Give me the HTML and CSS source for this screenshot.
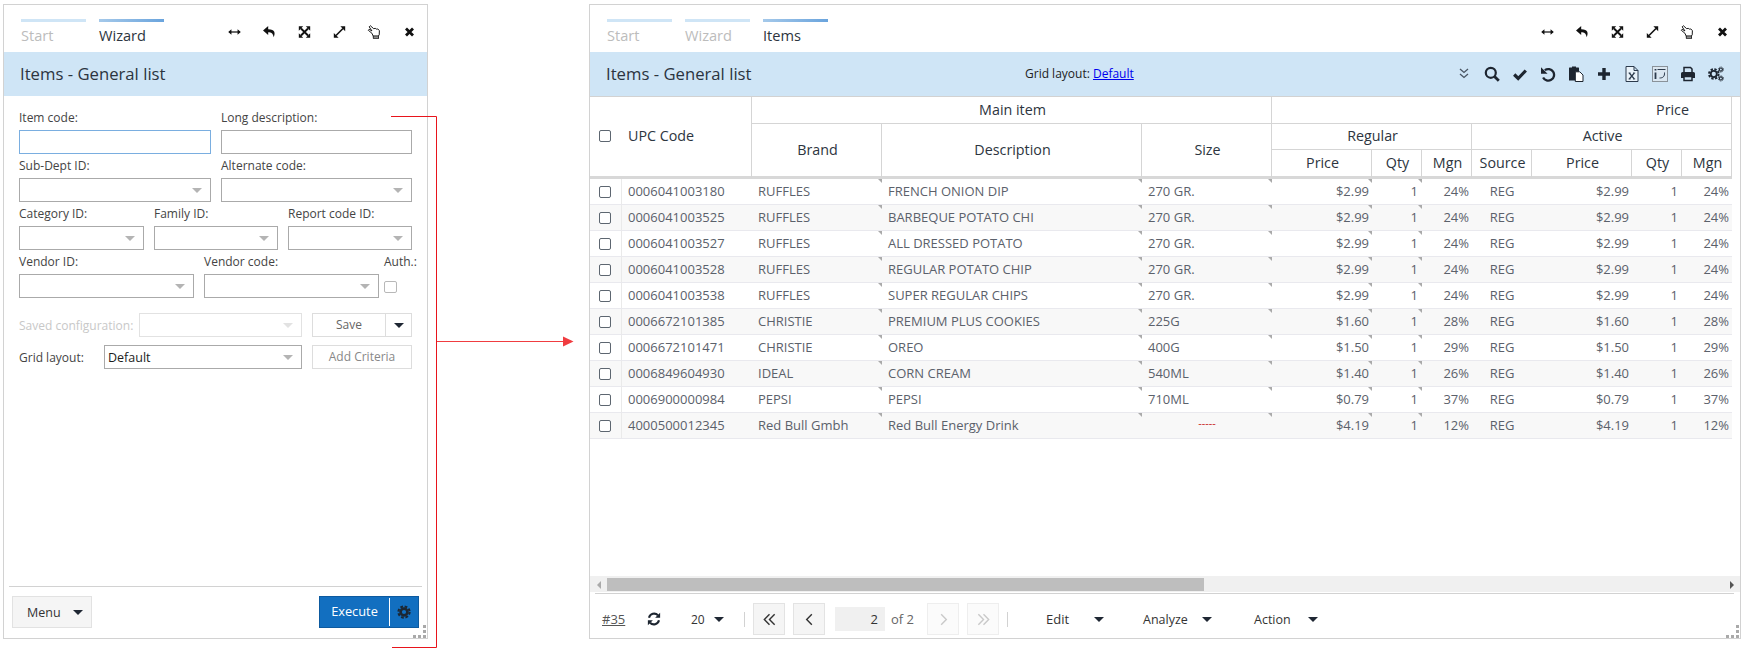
FILE: index.html
```html
<!DOCTYPE html>
<html lang="en">
<head>
<meta charset="utf-8">
<title>Items - General list</title>
<link rel="stylesheet" href="styles.css">
</head>
<body>
<svg class="sprite" xmlns="http://www.w3.org/2000/svg">
  <symbol id="i-width" viewBox="0 0 16 16"><path d="M2 8h12" stroke="currentColor" stroke-width="1.4"/><path d="M0.800 8L4.500 4.800v6.400zM15.200 8l-3.700-3.200v6.400z" fill="currentColor"/></symbol>
  <symbol id="i-reply" viewBox="0 0 16 16"><path d="M6.500 1.200L.6 6.300l5.900 5V8.300c3.600 0 5.300 1 6.300 5.700 1.900-4.500 1.900-8.800-6.300-9.100z" fill="currentColor"/></symbol>
  <symbol id="i-move" viewBox="0 0 16 16"><path d="M4 4l8 8M12 4l-8 8" stroke="currentColor" stroke-width="2.200"/><path d="M1.500 1.500h5l-5 5zM14.500 1.500v5l-5-5zM1.500 14.500v-5l5 5zM14.500 14.500h-5l5-5z" fill="currentColor"/></symbol>
  <symbol id="i-diag" viewBox="0 0 16 16"><path d="M4 12l8-8" stroke="currentColor" stroke-width="1.800"/><path d="M9 1.500h5.500V7zM1.500 9v5.500H7z" fill="currentColor"/></symbol>
  <symbol id="i-hand" viewBox="0 0 16 16"><path d="M3.200 .8l3.900 3.400 1.700-.4 1.400.9 1.600-.1 1.800 1.700-.2 4.900-1.100 1.500H6.600L5 9.400 .9 6l1-1.100 3.200 1.900-3.200-4.700z" fill="#fff" stroke="currentColor" stroke-width="1.100"/><path d="M6 12.200h7l.2 3.400H6.200z" fill="currentColor"/><path d="M7 13.300h5.200v1H7z" fill="#fff"/></symbol>
  <symbol id="i-close" viewBox="0 0 16 16"><path d="M4 4l8 8M12 4l-8 8" stroke="currentColor" stroke-width="3.200"/></symbol>
  <symbol id="i-dbl" viewBox="0 0 16 16"><path d="M4 3l4 3.500L12 3M4 8l4 3.500L12 8" fill="none" stroke="currentColor" stroke-width="1.300"/></symbol>
  <symbol id="i-search" viewBox="0 0 16 16"><circle cx="6.800" cy="6.800" r="5" fill="none" stroke="currentColor" stroke-width="2.200"/><path d="M10.500 10.500l4.300 4.300" stroke="currentColor" stroke-width="2.800"/></symbol>
  <symbol id="i-check" viewBox="0 0 16 16"><path d="M2.200 8.500l4 4 7.600-8" fill="none" stroke="currentColor" stroke-width="3.200"/></symbol>
  <symbol id="i-undo" viewBox="0 0 16 16"><path d="M4.800 4.200A5.800 5.800 0 1 1 3.100 11.500" fill="none" stroke="currentColor" stroke-width="2.300"/><path d="M1 1.200v6.600h6.600z" fill="currentColor"/></symbol>
  <symbol id="i-paste" viewBox="0 0 16 16"><path d="M1.500 1.500h2.500V.5h4v1h2.500a.5.500 0 0 1 .5.500V14.500H1V2a.5.500 0 0 1 .5-.500z" fill="currentColor"/><path d="M7.300 5.800h4.500l3.200 3.200v6.500H7.300z" fill="#fff" stroke="currentColor"/></symbol>
  <symbol id="i-plus" viewBox="0 0 16 16"><path d="M8 2v12M2 8h12" stroke="currentColor" stroke-width="3.400"/></symbol>
  <symbol id="i-xls" viewBox="0 0 16 16"><path d="M2 .5h8l4 4v11H2z M10 .5v4h4" fill="#eaf3fa" stroke="currentColor"/><path d="M5.300 7l5 6M10.300 7l-5 6" stroke="currentColor" stroke-width="1.200"/><path d="M4.500 7h2.200M9 7h2.200M4.500 13h2.200M9 13h2.200" stroke="currentColor" stroke-width=".8"/></symbol>
  <symbol id="i-layout" viewBox="0 0 16 16"><rect x=".5" y=".5" width="15" height="15" fill="#dbe7f1" stroke="#8a929a"/><path d="M5.500 3.500h8" stroke="currentColor"/><path d="M3.500 3v1.500M3.500 6.500V13" stroke="currentColor" stroke-width="1.800"/><path d="M12.500 6.500c.3 4-1.500 5.500-5 5.500" fill="none" stroke="currentColor"/></symbol>
  <symbol id="i-print" viewBox="0 0 16 16"><path d="M4 6V1.500h6.500L12 3v3" fill="none" stroke="currentColor" stroke-width="1.500"/><path d="M2.500 6h11A1.500 1.500 0 0 1 15 7.500V12h-3v-2H4v2H1V7.500A1.500 1.500 0 0 1 2.500 6z" fill="currentColor"/><path d="M4 10.500h8v4H4z" fill="none" stroke="currentColor" stroke-width="1.500"/></symbol>
  <symbol id="i-gear" viewBox="0 0 16 16"><circle cx="8" cy="8" r="3.900" fill="none" stroke="currentColor" stroke-width="3"/><circle cx="8" cy="8" r="6.400" fill="none" stroke="currentColor" stroke-width="2.400" stroke-dasharray="3.100 1.925"/></symbol>
  <symbol id="i-gears" viewBox="0 0 18 18"><circle cx="6.500" cy="9" r="3.400" fill="none" stroke="currentColor" stroke-width="2"/><circle cx="6.500" cy="9" r="5.400" fill="none" stroke="currentColor" stroke-width="2.200" stroke-dasharray="2.600 1.640"/><circle cx="14.500" cy="4" r="1.700" fill="none" stroke="currentColor" stroke-width="1.300"/><circle cx="14.500" cy="14" r="1.700" fill="none" stroke="currentColor" stroke-width="1.300"/><circle cx="14.500" cy="4" r="2.900" fill="none" stroke="currentColor" stroke-width=".9" stroke-dasharray="1.300 1.000"/><circle cx="14.500" cy="14" r="2.900" fill="none" stroke="currentColor" stroke-width=".9" stroke-dasharray="1.300 1.000"/></symbol>
  <symbol id="i-refresh" viewBox="0 0 16 16"><path d="M2.300 6.500A6 6 0 0 1 12.500 3.800M13.700 9.500A6 6 0 0 1 3.500 12.200" fill="none" stroke="currentColor" stroke-width="2.400"/><path d="M15 .8v5.700H9.300zM1 15.200V9.500h5.700z" fill="currentColor"/></symbol>
  <symbol id="i-first" viewBox="0 0 16 16"><path d="M8 2.500L2.500 8 8 13.500M13.500 2.500L8 8l5.500 5.500" fill="none" stroke="currentColor" stroke-width="1.500"/></symbol>
  <symbol id="i-prev" viewBox="0 0 16 16"><path d="M10.500 2.500L5 8l5.500 5.500" fill="none" stroke="currentColor" stroke-width="1.500"/></symbol>
  <symbol id="i-next" viewBox="0 0 16 16"><path d="M5.500 2.500L11 8l-5.500 5.500" fill="none" stroke="currentColor" stroke-width="1.500"/></symbol>
  <symbol id="i-last" viewBox="0 0 16 16"><path d="M2.500 2.500L8 8l-5.500 5.500M8 2.500L13.500 8 8 13.500" fill="none" stroke="currentColor" stroke-width="1.500"/></symbol>
  <symbol id="i-grip" viewBox="0 0 13 13"><path d="M10 0h3v3h-3zM10 5h3v3h-3zM10 10h3v3h-3zM5 10h3v3H5zM0 10h3v3H0z" fill="#a9a9a9"/></symbol>
</svg>

<section class="panel panel-wizard">
  <header class="tabs">
    <div class="tab"><span class="tab-bar"></span><span class="tab-label">Start</span></div>
    <div class="tab tab-active"><span class="tab-bar"></span><span class="tab-label">Wizard</span></div>
    <div class="win-icons">
      <svg class="win-icon"><use href="#i-width"/></svg>
      <svg class="win-icon"><use href="#i-reply"/></svg>
      <svg class="win-icon"><use href="#i-move"/></svg>
      <svg class="win-icon"><use href="#i-diag"/></svg>
      <svg class="win-icon"><use href="#i-hand"/></svg>
      <svg class="win-icon"><use href="#i-close"/></svg>
    </div>
  </header>
  <div class="band"><h1 class="title">Items - General list</h1></div>

  <form class="form">
    <div class="row row-2">
      <label class="field"><span class="lbl">Item code:</span><input class="ctl ctl-focus" type="text"></label>
      <label class="field"><span class="lbl">Long description:</span><input class="ctl" type="text"></label>
    </div>
    <div class="row row-2">
      <div class="field"><span class="lbl">Sub-Dept ID:</span><div class="ctl sel"></div></div>
      <div class="field"><span class="lbl">Alternate code:</span><div class="ctl sel"></div></div>
    </div>
    <div class="row row-3">
      <div class="field"><span class="lbl">Category ID:</span><div class="ctl sel"></div></div>
      <div class="field"><span class="lbl">Family ID:</span><div class="ctl sel"></div></div>
      <div class="field"><span class="lbl">Report code ID:</span><div class="ctl sel"></div></div>
    </div>
    <div class="row row-v">
      <div class="field"><span class="lbl">Vendor ID:</span><div class="ctl sel"></div></div>
      <div class="field"><span class="lbl">Vendor code:</span><div class="ctl sel"></div></div>
      <div class="field field-auth"><span class="lbl">Auth.:</span><span class="cb cb-light"></span></div>
    </div>
    <div class="cfg cfg-first">
      <div class="cfg-main">
        <span class="cfg-lbl cfg-lbl-off">Saved configuration:</span>
        <div class="ctl sel sel-off cfg-sel"></div>
      </div>
      <div class="split">
        <span class="split-main">Save</span>
        <span class="split-drop"><span class="caret"></span></span>
      </div>
    </div>
    <div class="cfg">
      <div class="cfg-main">
        <span class="cfg-lbl cfg-lbl-grid">Grid layout:</span>
        <div class="ctl sel sel-val cfg-sel"><span>Default</span></div>
      </div>
      <div class="btn-plain">Add Criteria</div>
    </div>
  </form>

  <footer class="wiz-foot">
    <div class="menu-btn">Menu<span class="caret"></span></div>
    <div class="exec">
      <span class="exec-main">Execute</span>
      <span class="exec-gear"><svg class="gear"><use href="#i-gear"/></svg></span>
    </div>
  </footer>
  <svg class="grip"><use href="#i-grip"/></svg>
</section>

<section class="panel panel-items">
  <header class="tabs">
    <div class="tab"><span class="tab-bar"></span><span class="tab-label">Start</span></div>
    <div class="tab"><span class="tab-bar"></span><span class="tab-label">Wizard</span></div>
    <div class="tab tab-active"><span class="tab-bar"></span><span class="tab-label">Items</span></div>
    <div class="win-icons">
      <svg class="win-icon"><use href="#i-width"/></svg>
      <svg class="win-icon"><use href="#i-reply"/></svg>
      <svg class="win-icon"><use href="#i-move"/></svg>
      <svg class="win-icon"><use href="#i-diag"/></svg>
      <svg class="win-icon"><use href="#i-hand"/></svg>
      <svg class="win-icon"><use href="#i-close"/></svg>
    </div>
  </header>
  <div class="band">
    <h1 class="title title-fixed">Items - General list</h1>
    <span class="layout-note">Grid layout: <a class="layout-link" href="#">Default</a></span>
    <div class="tools">
      <svg class="tool tool-dbl"><use href="#i-dbl"/></svg>
      <svg class="tool"><use href="#i-search"/></svg>
      <svg class="tool"><use href="#i-check"/></svg>
      <svg class="tool"><use href="#i-undo"/></svg>
      <svg class="tool"><use href="#i-paste"/></svg>
      <svg class="tool"><use href="#i-plus"/></svg>
      <svg class="tool tool-thin"><use href="#i-xls"/></svg>
      <svg class="tool tool-thin"><use href="#i-layout"/></svg>
      <svg class="tool"><use href="#i-print"/></svg>
      <svg class="tool"><use href="#i-gears"/></svg>
    </div>
  </div>

  <div class="grid-wrap">
    <table class="grid">
      <colgroup>
        <col class="w32"><col class="w130"><col class="w130"><col class="w260"><col class="w130">
        <col class="w100"><col class="w50"><col class="w50"><col class="w60"><col class="w100"><col class="w50"><col class="w50">
      </colgroup>
      <thead>
        <tr class="h1">
          <th rowspan="3" class="th-chk"><span class="cb"></span></th>
          <th rowspan="3" class="th-upc">UPC Code</th>
          <th colspan="3">Main item</th>
          <th colspan="7" class="th-price-group">Price</th>
        </tr>
        <tr class="h2">
          <th rowspan="2" class="th-last">Brand</th>
          <th rowspan="2" class="th-last">Description</th>
          <th rowspan="2" class="th-last">Size</th>
          <th colspan="3">Regular</th>
          <th colspan="4">Active</th>
        </tr>
        <tr class="h3">
          <th class="th-last">Price</th><th class="th-last">Qty</th><th class="th-last">Mgn</th>
          <th class="th-last">Source</th><th class="th-last">Price</th><th class="th-last">Qty</th><th class="th-last">Mgn</th>
        </tr>
      </thead>
      <tbody>
        <tr><td class="c-chk"><span class="cb"></span></td><td>0006041003180</td><td class="mk">RUFFLES</td><td class="mk">FRENCH ONION DIP</td><td class="mk">270 GR.</td><td class="num mk">$2.99</td><td class="num qty mk">1</td><td class="num">24%</td><td class="c-src">REG</td><td class="num">$2.99</td><td class="num qty">1</td><td class="num">24%</td></tr>
        <tr><td class="c-chk"><span class="cb"></span></td><td>0006041003525</td><td class="mk">RUFFLES</td><td class="mk">BARBEQUE POTATO CHI</td><td class="mk">270 GR.</td><td class="num mk">$2.99</td><td class="num qty mk">1</td><td class="num">24%</td><td class="c-src">REG</td><td class="num">$2.99</td><td class="num qty">1</td><td class="num">24%</td></tr>
        <tr><td class="c-chk"><span class="cb"></span></td><td>0006041003527</td><td class="mk">RUFFLES</td><td class="mk">ALL DRESSED POTATO</td><td class="mk">270 GR.</td><td class="num mk">$2.99</td><td class="num qty mk">1</td><td class="num">24%</td><td class="c-src">REG</td><td class="num">$2.99</td><td class="num qty">1</td><td class="num">24%</td></tr>
        <tr><td class="c-chk"><span class="cb"></span></td><td>0006041003528</td><td class="mk">RUFFLES</td><td class="mk">REGULAR POTATO CHIP</td><td class="mk">270 GR.</td><td class="num mk">$2.99</td><td class="num qty mk">1</td><td class="num">24%</td><td class="c-src">REG</td><td class="num">$2.99</td><td class="num qty">1</td><td class="num">24%</td></tr>
        <tr><td class="c-chk"><span class="cb"></span></td><td>0006041003538</td><td class="mk">RUFFLES</td><td class="mk">SUPER REGULAR CHIPS</td><td class="mk">270 GR.</td><td class="num mk">$2.99</td><td class="num qty mk">1</td><td class="num">24%</td><td class="c-src">REG</td><td class="num">$2.99</td><td class="num qty">1</td><td class="num">24%</td></tr>
        <tr><td class="c-chk"><span class="cb"></span></td><td>0006672101385</td><td class="mk">CHRISTIE</td><td class="mk">PREMIUM PLUS COOKIES</td><td class="mk">225G</td><td class="num mk">$1.60</td><td class="num qty mk">1</td><td class="num">28%</td><td class="c-src">REG</td><td class="num">$1.60</td><td class="num qty">1</td><td class="num">28%</td></tr>
        <tr><td class="c-chk"><span class="cb"></span></td><td>0006672101471</td><td class="mk">CHRISTIE</td><td class="mk">OREO</td><td class="mk">400G</td><td class="num mk">$1.50</td><td class="num qty mk">1</td><td class="num">29%</td><td class="c-src">REG</td><td class="num">$1.50</td><td class="num qty">1</td><td class="num">29%</td></tr>
        <tr><td class="c-chk"><span class="cb"></span></td><td>0006849604930</td><td class="mk">IDEAL</td><td class="mk">CORN CREAM</td><td class="mk">540ML</td><td class="num mk">$1.40</td><td class="num qty mk">1</td><td class="num">26%</td><td class="c-src">REG</td><td class="num">$1.40</td><td class="num qty">1</td><td class="num">26%</td></tr>
        <tr><td class="c-chk"><span class="cb"></span></td><td>0006900000984</td><td class="mk">PEPSI</td><td class="mk">PEPSI</td><td class="mk">710ML</td><td class="num mk">$0.79</td><td class="num qty mk">1</td><td class="num">37%</td><td class="c-src">REG</td><td class="num">$0.79</td><td class="num qty">1</td><td class="num">37%</td></tr>
        <tr><td class="c-chk"><span class="cb"></span></td><td>4000500012345</td><td class="mk">Red Bull Gmbh</td><td class="mk">Red Bull Energy Drink</td><td class="mk c-empty"><span>-----</span></td><td class="num mk">$4.19</td><td class="num qty mk">1</td><td class="num">12%</td><td class="c-src">REG</td><td class="num">$4.19</td><td class="num qty">1</td><td class="num">12%</td></tr>
      </tbody>
    </table>
  </div>

  <div class="hscroll">
    <span class="hs-btn"><span class="hs-left"></span></span>
    <span class="hs-thumb"></span>
    <span class="hs-track"></span>
    <span class="hs-btn"><span class="hs-right"></span></span>
  </div>
  <div class="grid-rule"></div>

  <footer class="pager">
    <a class="pg-id" href="#">#35</a>
    <svg class="pg-refresh"><use href="#i-refresh"/></svg>
    <span class="pg-size">20</span><span class="caret pg-size-caret"></span>
    <span class="pg-sep pg-sep-a"></span>
    <span class="nav nav-first"><svg class="nav-icon"><use href="#i-first"/></svg></span>
    <span class="nav nav-prev"><svg class="nav-icon"><use href="#i-prev"/></svg></span>
    <span class="pg-input">2</span>
    <span class="pg-of">of 2</span>
    <span class="nav nav-off nav-next"><svg class="nav-icon"><use href="#i-next"/></svg></span>
    <span class="nav nav-off nav-last"><svg class="nav-icon"><use href="#i-last"/></svg></span>
    <span class="pg-sep pg-sep-b"></span>
    <span class="act act-edit">Edit</span><span class="caret"></span>
    <span class="act act-analyze">Analyze</span><span class="caret"></span>
    <span class="act act-action">Action</span><span class="caret"></span>
  </footer>
  <svg class="grip"><use href="#i-grip"/></svg>
</section>

<svg class="connector" xmlns="http://www.w3.org/2000/svg" viewBox="0 0 1743 650">
  <path d="M436.500 341.500H566" fill="none" stroke="#f03c40"/>
  <path d="M391 116.500H436.500V647.500H392" fill="none" stroke="#e8141c"/>
  <path d="M573.500 341.500L563 336.500v10z" fill="#f03c40"/>
</svg>
</body>
</html>
```

FILE: styles.css
```css
* { box-sizing: border-box; }
html, body { margin: 0; padding: 0; }
body {
  width: 1743px;
  height: 650px;
  padding: 4px 0 0 3px;
  display: flex;
  align-items: flex-start;
  background: #fff;
  font-family: "Open Sans", "Liberation Sans", sans-serif;
  font-size: 12px;
  color: #333;
  overflow: hidden;
  position: relative;
}
.sprite { display: none; }

.panel {
  position: relative;
  height: 635px;
  border: 1px solid #d2d2d2;
  display: flex;
  flex-direction: column;
  background: #fff;
}
.panel-wizard { width: 425px; }
.panel-items { width: 1152px; margin-left: 161px; }

/* tabs */
.tabs { height: 47px; flex: none; display: flex; padding-left: 17px; }
.tab { width: 65px; margin-right: 13px; padding-top: 14px; }
.tab-bar { display: block; height: 3px; background: #cfe5f6; }
.tab-label { display: block; margin-top: 3px; font-size: 14.6px; line-height: 20px; color: #bcbcbc; }
.tab-active .tab-bar { background: linear-gradient(90deg, #a5c9ea, #6aa4dd); }
.tab-active .tab-label { color: #2d3540; }
.win-icons { margin-left: auto; display: flex; padding-top: 20px; color: #111; }
.win-icon { width: 35px; height: 14px; }

/* band */
.band {
  height: 44px;
  flex: none;
  display: flex;
  align-items: center;
  padding-left: 16px;
  padding-bottom: 2px;
  background: #cfe5f6;
}
.title { margin: 0; font-size: 16.7px; font-weight: 400; color: #2b3440; white-space: nowrap; }
.title-fixed { width: 419px; }
.layout-note { font-size: 12px; color: #222; }
.layout-link { color: #0000ee; text-decoration: underline; }
.tools { margin-left: auto; display: flex; padding-right: 10px; padding-top: 2px; color: #1d2530; }
.tool { width: 28px; height: 16px; }
.tool-dbl { color: #4a5563; }
.tool-thin { color: #2c3a4c; }

/* wizard form */
.form { flex: 1; padding: 10px 15px 0; }
.row { display: grid; column-gap: 10px; }
.row-2 { grid-template-columns: 192px 191px; }
.row-3 { grid-template-columns: 125px 124px 124px; }
.row-v { grid-template-columns: 175px 175px 33px; }
.field { display: block; }
.field-auth { margin-left: -5px; }
.lbl { display: block; height: 24px; line-height: 23px; font-size: 12px; color: #444; white-space: nowrap; }
.ctl { display: block; width: 100%; height: 24px; border: 1px solid #aaa; background: #fff; padding: 0; margin: 0; outline: 0; }
.ctl-focus { border-color: #7aaee0; }
.sel { display: flex; align-items: center; justify-content: flex-end; padding-right: 8px; }
.sel::after {
  content: "";
  border-left: 5px solid transparent;
  border-right: 5px solid transparent;
  border-top: 5px solid #b4b4b4;
}
.sel-off { border-color: #e2e2e2; }
.sel-off::after { border-top-color: #e2e2e2; }
.sel-val { justify-content: space-between; padding-left: 3px; color: #1c1c1c; font-size: 12.5px; }
.cb { display: block; width: 12px; height: 12px; border: 1px solid #5d6670; border-radius: 2px; background: #fff; }
.cb-light { border-color: #b8b8b8; width: 13px; margin: 7px 0 0 0; }

.cfg { display: grid; grid-template-columns: 283px 100px; column-gap: 10px; margin-top: 8px; }
.cfg-first { margin-top: 15px; }
.cfg-main { display: flex; align-items: center; }
.cfg-lbl { flex: none; font-size: 12px; white-space: nowrap; }
.cfg-lbl-off { width: 120px; color: #c8c8c8; }
.cfg-lbl-grid { width: 85px; color: #444; }
.cfg-sel { flex: 1; width: auto; }
.split { display: flex; height: 24px; border: 1px solid #ddd; }
.split-main { width: 73px; line-height: 22px; text-align: center; color: #666; border-right: 1px solid #ddd; }
.split-drop { flex: 1; display: flex; align-items: center; justify-content: center; }
.btn-plain { height: 24px; line-height: 22px; border: 1px solid #ddd; text-align: center; color: #888; }
.caret {
  display: inline-block;
  flex: none;
  width: 0;
  height: 0;
  border-left: 5px solid transparent;
  border-right: 5px solid transparent;
  border-top: 5px solid #1f2733;
}

/* wizard footer */
.wiz-foot {
  flex: none;
  height: 52px;
  margin: 0 5px;
  padding: 9px 3px 10px;
  border-top: 1px solid #d2d2d2;
  display: flex;
  justify-content: space-between;
}
.menu-btn {
  width: 80px;
  height: 32px;
  display: flex;
  align-items: center;
  padding: 0 0 0 14px;
  background: #f5f5f5;
  border: 1px solid #e2e2e2;
  font-size: 12.5px;
  line-height: 27px;
  color: #333;
}
.menu-btn .caret { margin-left: 12px; margin-top: 1px; }
.exec { width: 100px; height: 32px; display: flex; background: #126fc0; border: 1px solid #0d5a9f; color: #fff; }
.exec-main { width: 70px; text-align: center; font-size: 12.8px; font-weight: 500; border-right: 1px solid #fff; margin: 1px 0; line-height: 26px; }
.exec-gear { flex: 1; display: flex; align-items: center; justify-content: center; }
.gear { width: 14px; height: 14px; color: #1c2733; }

.grip { position: absolute; right: 1px; bottom: 0; width: 13px; height: 13px; }

/* grid */
.grid-wrap { flex: 1; min-height: 0; overflow: hidden; border-top: 1px solid #d2d2d2; }
.grid { table-layout: fixed; width: 1142px; border-collapse: separate; border-spacing: 0; }
.w32 { width: 32px; } .w50 { width: 50px; } .w60 { width: 60px; }
.w100 { width: 100px; } .w130 { width: 130px; } .w260 { width: 260px; }
.grid th {
  padding: 0 3px 2px 5px;
  font-size: 14.3px;
  font-weight: 400;
  color: #2d3540;
  text-align: center;
  white-space: nowrap;
  border-right: 1px solid #d5d5d5;
  border-bottom: 1px solid #d5d5d5;
}
.h1 { height: 27px; }
.h2 { height: 26px; }
.h3 { height: 29px; }
.grid .th-chk { padding: 0 0 2px 9px; border-right: 0; border-bottom: 3px solid #d8d8d8; }
.grid .th-upc { padding-left: 6px; text-align: left; border-bottom: 3px solid #d8d8d8; }
.grid .th-last { border-bottom: 3px solid #d8d8d8; }
.grid .th-price-group { padding-left: 345px; }
.grid td {
  position: relative;
  height: 26px;
  padding: 0 6px 2px;
  font-size: 13px;
  color: #5b616b;
  white-space: nowrap;
  overflow: hidden;
  border-bottom: 1px solid #e9e9ee;
}
.grid tbody tr:nth-child(even) td { background: #f8f8f8; }
.grid .c-chk { padding: 0 0 0 9px; border-right: 1px solid #eaeaea; }
.grid .num { text-align: right; padding: 0 3px 2px 0; }
.grid .qty { padding-right: 4px; }
.grid .c-src { text-align: center; padding: 0 0 2px; }
.grid .c-empty { text-align: center; color: #c81e1e; font-size: 11px; }
.c-empty span { display: block; margin-top: -4px; }
.mk::after {
  content: "";
  position: absolute;
  top: 0;
  right: 0;
  border-top: 4px solid #aaa;
  border-left: 4px solid transparent;
}

/* horizontal scrollbar */
.hscroll { flex: none; height: 16px; display: flex; background: #f0f0f0; }
.hs-btn { flex: none; width: 17px; display: flex; align-items: center; justify-content: center; padding-top: 2px; }
.hs-left { border-top: 4px solid transparent; border-bottom: 4px solid transparent; border-right: 4px solid #aaa; }
.hs-right { border-top: 4px solid transparent; border-bottom: 4px solid transparent; border-left: 4px solid #555; }
.hs-thumb { flex: none; width: 597px; height: 13px; margin-top: 2px; background: #bebebe; }
.hs-track { flex: 1; }
.grid-rule { flex: none; height: 1px; margin: 1px 6px 0 5px; background: #d2d2d2; }

/* pager */
.pager { flex: none; height: 44px; padding: 9px 0 3px 12px; display: flex; align-items: center; font-size: 13px; color: #333; }
.pg-id { width: 32px; color: #555; text-decoration: underline; }
.pg-refresh { width: 14px; height: 14px; margin-left: 13px; color: #1d2530; }
.pg-size { width: 23px; margin-left: 30px; font-size: 12px; }
.pg-size-caret { margin-left: 0; }
.pg-sep { width: 1px; height: 15px; background: #d2d2d2; }
.pg-sep-a { margin-left: 20px; }
.pg-sep-b { margin-left: 8px; }
.nav { width: 32px; height: 32px; display: flex; align-items: center; justify-content: center; background: #f5f5f5; border: 1px solid #e3e3e3; color: #333; }
.nav-first { margin-left: 8px; }
.nav-prev { margin-left: 8px; }
.nav-next { margin-left: 13px; }
.nav-last { margin-left: 8px; }
.nav-off { background: #fbfbfb; border-color: #eee; color: #c9c9c9; }
.nav-icon { width: 15px; height: 15px; }
.pg-input { width: 50px; height: 24px; margin-left: 10px; padding-right: 7px; line-height: 24px; text-align: right; background: #f0f0f0; }
.pg-of { width: 23px; margin-left: 6px; color: #666; white-space: nowrap; }
.act { color: #333; font-size: 12.5px; }
.act-edit { width: 48px; margin-left: 38px; font-size: 13px; }
.act-analyze { width: 59px; margin-left: 39px; }
.act-action { width: 54px; margin-left: 42px; }

/* red connector drawn over the page */
.connector { position: absolute; left: 0; top: 0; width: 1743px; height: 650px; pointer-events: none; }
```
